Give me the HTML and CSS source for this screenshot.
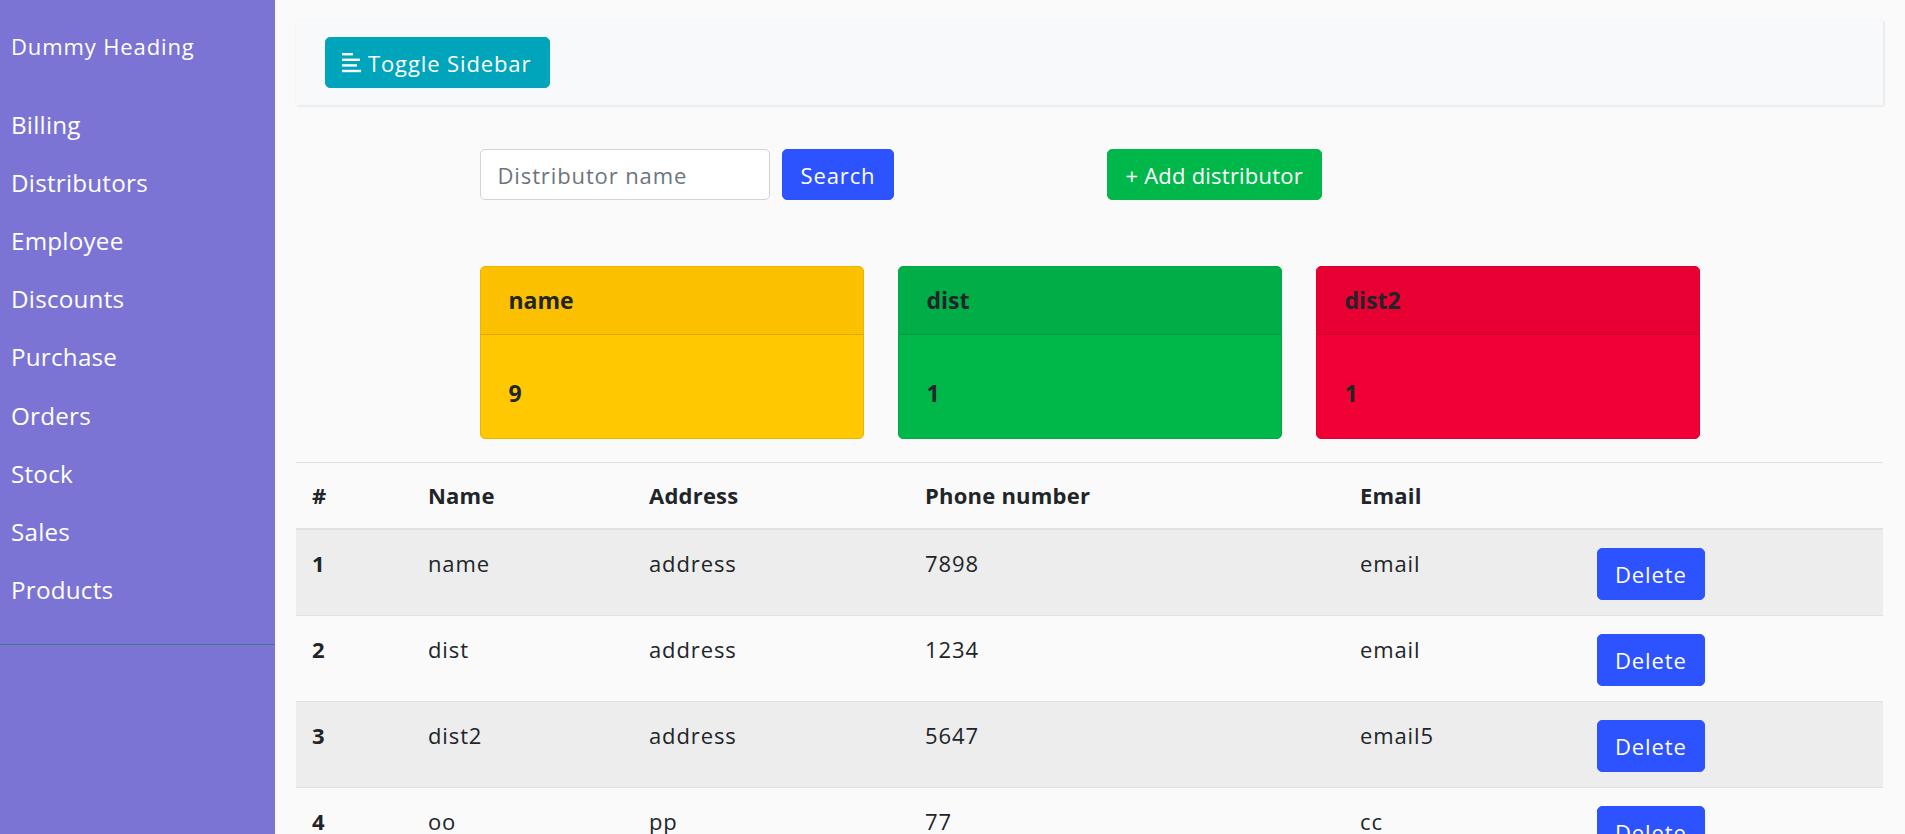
FILE: index.html
```html
<!DOCTYPE html>
<html lang="en">
<head>
<meta charset="utf-8">
<title>Distributors</title>
<link rel="stylesheet" href="styles.css">
</head>
<body>
<div class="wrapper">
  <nav class="sidebar">
    <div class="sidebar-header"><p>Dummy Heading</p></div>
    <ul class="components">
      <li><a href="#">Billing</a></li>
      <li><a href="#">Distributors</a></li>
      <li><a href="#">Employee</a></li>
      <li><a href="#">Discounts</a></li>
      <li><a href="#">Purchase</a></li>
      <li><a href="#">Orders</a></li>
      <li><a href="#">Stock</a></li>
      <li><a href="#">Sales</a></li>
      <li><a href="#">Products</a></li>
    </ul>
  </nav>
  <div class="content">
    <nav class="topbar">
      <button class="btn btn-info toggle" type="button">
        <svg class="ico" width="19" height="20" viewBox="0 0 19 20" aria-hidden="true">
          <rect x="0" y="0" width="11" height="2.4" fill="#fff"/>
          <rect x="0" y="5.6" width="18" height="2.4" fill="#fff"/>
          <rect x="0" y="11.2" width="15" height="2.4" fill="#fff"/>
          <rect x="0" y="16.8" width="19" height="2.4" fill="#fff"/>
        </svg>
        <span>Toggle Sidebar</span>
      </button>
    </nav>
    <div class="container">
      <div class="search-row">
        <form class="search">
          <input class="field" type="text" placeholder="Distributor name">
          <button class="btn btn-primary" type="button">Search</button>
        </form>
        <div class="add-col">
          <button class="btn btn-success add" type="button">+ Add distributor</button>
        </div>
      </div>
      <div class="cards">
        <div class="card card-yellow">
          <div class="card-header">name</div>
          <div class="card-body">9</div>
        </div>
        <div class="card card-green">
          <div class="card-header">dist</div>
          <div class="card-body">1</div>
        </div>
        <div class="card card-red">
          <div class="card-header">dist2</div>
          <div class="card-body">1</div>
        </div>
      </div>
    </div>
    <table class="table">
      <thead>
        <tr>
          <th class="c-num">#</th>
          <th class="c-name">Name</th>
          <th class="c-addr">Address</th>
          <th class="c-phone">Phone number</th>
          <th class="c-email">Email</th>
          <th class="c-act"></th>
        </tr>
      </thead>
      <tbody>
        <tr>
          <th class="rownum">1</th><td>name</td><td>address</td><td>7898</td><td>email</td>
          <td class="act"><button class="btn btn-primary del" type="button">Delete</button></td>
        </tr>
        <tr>
          <th class="rownum">2</th><td>dist</td><td>address</td><td>1234</td><td>email</td>
          <td class="act"><button class="btn btn-primary del" type="button">Delete</button></td>
        </tr>
        <tr>
          <th class="rownum">3</th><td>dist2</td><td>address</td><td>5647</td><td>email5</td>
          <td class="act"><button class="btn btn-primary del" type="button">Delete</button></td>
        </tr>
        <tr>
          <th class="rownum">4</th><td>oo</td><td>pp</td><td>77</td><td>cc</td>
          <td class="act"><button class="btn btn-primary del" type="button">Delete</button></td>
        </tr>
      </tbody>
    </table>
  </div>
</div>
</body>
</html>
```
FILE: styles.css
```css
* { box-sizing: border-box; }

html, body {
  margin: 0;
  padding: 0;
}

body {
  background: #fafafa;
  font-family: "Open Sans", "Noto Sans", "DejaVu Sans", sans-serif;
  font-size: 22px;
  line-height: 33px;
  color: #212529;
  letter-spacing: 0.04em;
}

.wrapper {
  display: flex;
  align-items: stretch;
  min-height: 100vh;
}

/* Sidebar */
.sidebar {
  width: 275px;
  flex-shrink: 0;
  min-height: 100vh;
  background: #7b74d5;
  color: #fff;
}

.sidebar-header {
  padding: 30px 10px 0 11px;
}

.sidebar-header p {
  margin: 0;
  font-size: 22px;
  line-height: 33px;
  color: #fff;
}

.components {
  list-style: none;
  margin: 0;
  padding: 32.6px 0 24.6px;
  border-bottom: 1px solid #47748b;
}

.components a {
  display: block;
  padding: 10px 10px 10px 11px;
  font-size: 24.2px;
  line-height: 38.2px;
  letter-spacing: 0.01em;
  color: #fff;
  text-decoration: none;
}

/* Content */
.content {
  flex: 1;
  min-width: 0;
  padding: 20px 22px 20px 21px;
}

.topbar {
  display: flex;
  align-items: center;
  height: 85px;
  padding: 0 29px;
  background: #f8f9fa;
  box-shadow: 1px 1px 3px rgba(0, 0, 0, 0.1);
  margin-bottom: 44px;
}

.btn {
  display: inline-flex;
  align-items: center;
  height: 51px;
  padding: 0 18px;
  border: 1px solid transparent;
  border-radius: 5px;
  font-family: inherit;
  font-size: 22px;
  letter-spacing: 0.04em;
  color: #fff;
  cursor: pointer;
}

.btn-info { background: #00a5bb; border-color: #00a5bb; }
.btn-primary { background: #2d52ff; border-color: #2d52ff; }
.btn-success { background: #00b74a; border-color: #00b74a; }

.toggle {
  padding: 0 18px 0 16px;
  gap: 7px;
}

.add {
  letter-spacing: 0.01em;
}

.ico { display: block; }

.container {
  width: 1220px;
  margin: 0 auto;
}

.search-row {
  display: grid;
  grid-template-columns: 1fr 1fr;
  column-gap: 34px;
}

.search {
  display: flex;
  align-items: center;
  gap: 12px;
  margin: 0;
}

.field {
  width: 290px;
  height: 51px;
  padding: 0 17px;
  border: 1px solid #ced4da;
  border-radius: 5px;
  background: #fff;
  font-family: inherit;
  font-size: 22px;
  letter-spacing: 0.04em;
  color: #495057;
}

.field::placeholder { color: #6c757d; }

.cards {
  display: grid;
  grid-template-columns: repeat(3, 1fr);
  column-gap: 34px;
  margin-top: 66px;
}

.card {
  border: 1px solid;
  border-radius: 5px;
  overflow: hidden;
  font-weight: 700;
  font-size: 23px;
  letter-spacing: 0;
}

.card-header {
  height: 68px;
  padding: 17px 28px 0;
  border-bottom: 1px solid rgba(0, 0, 0, 0.125);
}

.card-body {
  height: 103px;
  padding: 42px 28px 0;
}

.card-yellow { background: #ffc800; border-color: #e8b600; }
.card-yellow .card-header { background: #fbc100; }
.card-green { background: #00b74a; border-color: #00a845; }
.card-green .card-header { background: #00ad46; }
.card-red { background: #f00035; border-color: #dc0031; }
.card-red .card-header { background: #e80033; }

/* Table */
.table {
  width: 100%;
  margin-top: 23px;
  border-collapse: collapse;
  table-layout: fixed;
}

.table th,
.table td {
  text-align: left;
  vertical-align: top;
  padding: 17px 16px 16px;
  border-top: 1px solid #dee2e6;
}

.table thead th {
  padding: 16px 16px 16px;
  border-bottom: 2px solid #dee2e6;
  font-weight: 700;
  letter-spacing: 0.01em;
}

.table .rownum {
  font-weight: 700;
  letter-spacing: 0;
}

.table tbody tr:nth-child(odd) { background: rgba(0, 0, 0, 0.05); }

.c-num { width: 116px; }
.c-name { width: 221px; }
.c-addr { width: 276px; }
.c-phone { width: 435px; }
.c-email { width: 237px; }

.table td.act {
  padding: 18px 16px 15px;
}

.del {
  height: 52px;
  padding: 0 17px;
}
```
